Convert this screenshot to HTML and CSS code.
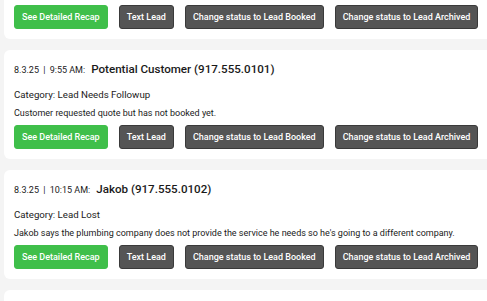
FILE: index.html
```html
<!DOCTYPE html>
<html lang="en">
<head>
  <meta charset="UTF-8" />
  <meta name="viewport" content="width=device-width, initial-scale=1.0"/>
  <title>Leads</title>
  <link rel="stylesheet" href="styles.css">
</head>
<body>
  <div class="lead-list">
    <div class="lead-card">
      <div class="lead-head">
        <span class="lead-time">8.3.25 <span class="sep">|</span> 9:40 AM:</span>
        <span class="lead-name">Maria (917.555.0100)</span>
      </div>
      <p class="lead-cat">Category: Lead Booked</p>
      <p class="lead-desc">Maria booked a drain cleaning for Thursday morning.</p>
      <div class="lead-actions">
        <button class="btn btn-green">See Detailed Recap</button>
        <button class="btn">Text Lead</button>
        <button class="btn">Change status to Lead Booked</button>
        <button class="btn">Change status to Lead Archived</button>
      </div>
    </div>

    <div class="lead-card">
      <div class="lead-head">
        <span class="lead-time">8.3.25 <span class="sep">|</span> 9:55 AM:</span>
        <span class="lead-name">Potential Customer (917.555.0101)</span>
      </div>
      <p class="lead-cat">Category: Lead Needs Followup</p>
      <p class="lead-desc">Customer requested quote but has not booked yet.</p>
      <div class="lead-actions">
        <button class="btn btn-green">See Detailed Recap</button>
        <button class="btn">Text Lead</button>
        <button class="btn">Change status to Lead Booked</button>
        <button class="btn">Change status to Lead Archived</button>
      </div>
    </div>

    <div class="lead-card">
      <div class="lead-head">
        <span class="lead-time">8.3.25 <span class="sep">|</span> 10:15 AM:</span>
        <span class="lead-name">Jakob (917.555.0102)</span>
      </div>
      <p class="lead-cat">Category: Lead Lost</p>
      <p class="lead-desc">Jakob says the plumbing company does not provide the service he needs so he's going to a different company.</p>
      <div class="lead-actions">
        <button class="btn btn-green">See Detailed Recap</button>
        <button class="btn">Text Lead</button>
        <button class="btn">Change status to Lead Booked</button>
        <button class="btn">Change status to Lead Archived</button>
      </div>
    </div>

    <div class="lead-card">
      <div class="lead-head">
        <span class="lead-time">8.3.25 <span class="sep">|</span> 10:40 AM:</span>
        <span class="lead-name">Dana (917.555.0103)</span>
      </div>
    </div>
  </div>
</body>
</html>
```

FILE: styles.css
```css
body {
  margin: 0;
  background: #f4f4f4;
  font-family: Roboto, "Liberation Sans", sans-serif;
  color: #1a1a1a;
  overflow: hidden;
}
.lead-list {
  margin-top: -70px;
  padding: 0 4px;
  width: 520px;
  display: flex;
  flex-direction: column;
  gap: 11px;
}
.lead-card {
  background: #fff;
  border-radius: 6px;
  padding: 10px 10px 10px;
}
.lead-head {
  display: flex;
  align-items: baseline;
  gap: 6px;
  height: 18px;
  line-height: 18px;
  white-space: nowrap;
}
.lead-time {
  font-size: 9px;
}
.sep {
  padding: 0 2px;
}
.lead-name {
  font-size: 11.6px;
  font-weight: 500;
}
.lead-cat, .lead-desc {
  margin: 0;
  font-size: 9px;
  line-height: 14px;
  white-space: nowrap;
}
.lead-cat {
  margin-top: 10px;
  font-size: 9.7px;
}
.lead-desc {
  margin-top: 4px;
}
.lead-actions {
  display: flex;
  gap: 11px;
  margin-top: 5px;
}
.btn {
  flex-shrink: 0;
  height: 24px;
  padding: 0 7px;
  font-family: Roboto, "Liberation Sans", sans-serif;
  font-size: 9px;
  font-weight: 500;
  white-space: nowrap;
  color: #fff;
  background: #555;
  border: 1px solid #3a3a3a;
  border-radius: 3px;
}
.btn-green {
  background: #3fbf4a;
  border-color: #3fbf4a;
}
```
